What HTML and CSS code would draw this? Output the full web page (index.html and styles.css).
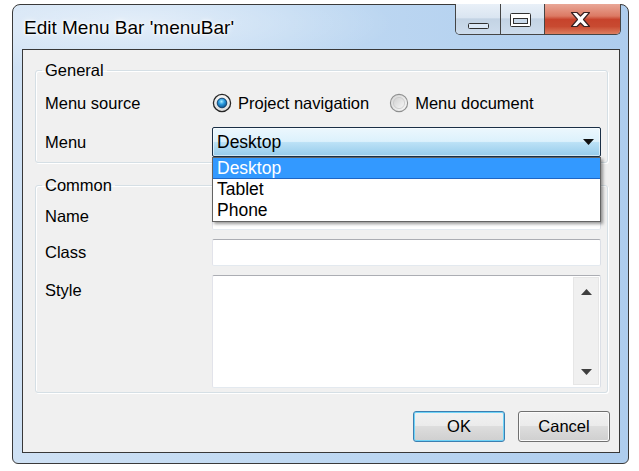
FILE: index.html
```html
<!DOCTYPE html>
<html>
<head>
<meta charset="utf-8">
<title>Edit Menu Bar</title>
<link rel="stylesheet" href="styles.css">
</head>
<body>
<div class="window">
  <div class="titlebar">
    <span class="title">Edit Menu Bar 'menuBar'</span>
    <div class="caption-buttons">
      <div class="cbtn min">
        <svg width="44" height="30" viewBox="0 0 44 30"><rect x="12.5" y="19.5" width="20" height="5" rx="1" fill="#dbe8f6" stroke="#303030"/></svg>
      </div>
      <div class="cbtn max">
        <svg width="43" height="30" viewBox="0 0 43 30"><rect x="9.5" y="9.5" width="20" height="13" rx="1" fill="#fff" stroke="#303030"/><rect x="12.5" y="14.5" width="14" height="5" fill="#c9d9ea" stroke="#303030"/></svg>
      </div>
      <div class="cbtn close">
        <svg width="75" height="30" viewBox="0 0 75 30"><path d="M26.5 8.5 H32 L35.5 12 L39 8.5 H44.5 L38.5 15.5 L44.5 22.5 H39 L35.5 19 L32 22.5 H26.5 L32.5 15.5 Z" fill="#fff" stroke="#3a2222" stroke-width="1.2" stroke-linejoin="round"/></svg>
      </div>
    </div>
  </div>
  <div class="client">
    <fieldset class="group general">
      <legend>General</legend>
      <div class="form">
        <span class="label">Menu source</span>
        <div class="radios">
          <span class="radio">
            <svg width="20" height="20" viewBox="0 0 20 20">
              <defs>
                <radialGradient id="dot" cx="45%" cy="35%" r="65%"><stop offset="0" stop-color="#a9ecff"/><stop offset="0.45" stop-color="#2a9be0"/><stop offset="1" stop-color="#0b4f8a"/></radialGradient>
                <linearGradient id="ringOn" x1="0" y1="0" x2="0" y2="1"><stop offset="0" stop-color="#f6f6f6"/><stop offset="1" stop-color="#dcdcdc"/></linearGradient>
              </defs>
              <circle cx="10" cy="10" r="8.6" fill="url(#ringOn)" stroke="#262626" stroke-width="1.3"/>
              <circle cx="10" cy="10" r="4.8" fill="url(#dot)" stroke="#0c3b66" stroke-width="0.9"/>
            </svg>
            Project navigation
          </span>
          <span class="radio">
            <svg width="20" height="20" viewBox="0 0 20 20">
              <defs>
                <linearGradient id="ringOff" x1="0" y1="0" x2="1" y2="1"><stop offset="0" stop-color="#d4d4d4"/><stop offset="1" stop-color="#fafafa"/></linearGradient>
                <linearGradient id="ringIn" x1="0" y1="0" x2="1" y2="1"><stop offset="0" stop-color="#cfcfcf"/><stop offset="1" stop-color="#f8f8f8"/></linearGradient>
              </defs>
              <circle cx="10" cy="10" r="8.6" fill="url(#ringOff)" stroke="#8e8f8f" stroke-width="1.1"/>
              <circle cx="10" cy="10" r="5.6" fill="url(#ringIn)" stroke="#c4c4c4" stroke-width="0.7"/>
            </svg>
            Menu document
          </span>
        </div>
        <span class="label">Menu</span>
        <div class="combo">
          <span class="combo-text">Desktop</span>
          <svg class="combo-arrow" width="11" height="6" viewBox="0 0 11 6"><path d="M0 0 H11 L5.5 6 Z" fill="#111"/></svg>
          <ul class="droplist">
            <li class="selected">Desktop</li>
            <li>Tablet</li>
            <li>Phone</li>
          </ul>
        </div>
      </div>
    </fieldset>
    <fieldset class="group common">
      <legend>Common</legend>
      <div class="form">
        <span class="label">Name</span>
        <div class="input">menuBar</div>
        <span class="label">Class</span>
        <div class="input"></div>
        <span class="label top">Style</span>
        <div class="textarea">
          <div class="scrollbar">
            <svg width="11" height="6" viewBox="0 0 11 6"><path d="M0 6 H11 L5.5 0 Z" fill="#3f3f3f"/></svg>
            <svg width="11" height="6" viewBox="0 0 11 6"><path d="M0 0 H11 L5.5 6 Z" fill="#3f3f3f"/></svg>
          </div>
        </div>
      </div>
    </fieldset>
    <div class="buttons">
      <button class="btn default">OK</button>
      <button class="btn">Cancel</button>
    </div>
  </div>
</div>
</body>
</html>
```
FILE: styles.css
```css
* {
  box-sizing: border-box;
}

html,
body {
  margin: 0;
  padding: 0;
  background: #ffffff;
}

body {
  font-family: "Liberation Sans", Arial, sans-serif;
  font-size: 16.5px;
  color: #000;
}

.window {
  margin: 4px 0 0 12px;
  width: 617px;
  height: 460px;
  border: 1px solid #3a3a3a;
  border-radius: 8px 8px 6px 6px;
  padding: 0 8px 10px 9px;
  display: flex;
  flex-direction: column;
  background:
    radial-gradient(ellipse 260px 50px at 120px 18px, rgba(255, 255, 255, 0.5), rgba(255, 255, 255, 0)),
    linear-gradient(to right, #cfe1f4 0%, #c0d9f2 45%, #aecdee 100%);
}

.titlebar {
  height: 44px;
  display: flex;
  justify-content: space-between;
  align-items: flex-start;
}

.title {
  margin: 12px 0 0 2px;
  font-size: 19px;
  line-height: 22px;
  color: #000;
  text-shadow: 0 0 6px #fff, 0 0 3px #fff, 0 0 2px #fff;
}

.caption-buttons {
  display: flex;
  margin: -1px -1px 0 0;
  height: 31px;
  border: 1px solid #454545;
  border-top: none;
  border-radius: 0 0 5px 5px;
  overflow: hidden;
}

.cbtn svg {
  display: block;
}

.min,
.max {
  background: linear-gradient(#e9f0f8 0%, #dae5f1 45%, #c3d3e4 50%, #cddcec 100%);
}

.min {
  width: 44px;
}

.max {
  width: 44px;
  border-left: 1px solid #454545;
}

.close {
  width: 76px;
  border-left: 1px solid #454545;
  background: linear-gradient(#e9a797 0%, #dc7a64 40%, #c7432c 52%, #c84a31 75%, #dd7e5f 100%);
}

.client {
  height: 404px;
  border: 1px solid #383838;
  background: #f0f0f0;
  padding: 11px 11px 0 12px;
}

.group {
  margin: 0;
  min-inline-size: 0;
  padding: 8px 6px 5px 9px;
  border: 1px solid #d5dfe5;
  border-radius: 3px;
  box-shadow: inset 1px 1px 0 #fff, 1px 1px 0 #fff;
}

.group legend {
  padding: 0 3px;
  margin-left: -3px;
  font-size: 16.5px;
  line-height: 19px;
}

.common {
  margin-top: 13px;
  padding-bottom: 4px;
}

.form {
  display: grid;
  grid-template-columns: 167px 1fr;
  row-gap: 9px;
  align-items: center;
}

.label {
  line-height: 19px;
}

.label.top {
  align-self: start;
  padding-top: 6px;
}

.radios {
  height: 30px;
  display: flex;
  align-items: center;
  gap: 20px;
}

.radio {
  display: flex;
  align-items: center;
  gap: 6px;
}

.radio svg {
  display: block;
}

.combo {
  position: relative;
  height: 30px;
  border: 1px solid #1a2f46;
  border-radius: 2px;
  display: flex;
  align-items: center;
  justify-content: space-between;
  padding: 0 6px 0 4px;
  background: linear-gradient(#ecf7fd 0%, #dcf1fc 48%, #bbe1f6 52%, #96cbeb 100%);
  box-shadow: inset 0 0 0 1px rgba(255, 255, 255, 0.55);
}

.combo-text {
  font-size: 17.5px;
  line-height: 21px;
}

.combo-arrow {
  display: block;
}

.droplist {
  position: absolute;
  z-index: 10;
  top: calc(100% + 1px);
  left: -1px;
  right: -1px;
  margin: 0;
  padding: 0;
  list-style: none;
  background: #fff;
  border: 1px solid #646464;
  box-shadow: 2px 2px 3px rgba(0, 0, 0, 0.4);
}

.droplist li {
  height: 21px;
  line-height: 21px;
  padding-left: 4px;
  font-size: 17.5px;
}

.droplist li.selected {
  background: #3399ff;
  color: #fff;
  border-bottom: 1px solid #1f66c4;
  line-height: 20px;
}

.input {
  height: 27px;
  background: #fff;
  border: 1px solid;
  border-color: #abadb3 #dbdfe6 #e3e9ef #e2e3ea;
  border-radius: 2px;
  padding-left: 4px;
  line-height: 25px;
}

.textarea {
  height: 113px;
  background: #fff;
  border: 1px solid;
  border-color: #abadb3 #dbdfe6 #e3e9ef #e2e3ea;
  border-radius: 2px;
  display: flex;
  justify-content: flex-end;
  padding: 1px 1px 2px 0;
}

.scrollbar {
  width: 26px;
  background: #f0f0f0;
  border: 1px solid #e6e6e6;
  display: flex;
  flex-direction: column;
  justify-content: space-between;
  align-items: center;
  padding: 11px 0 9px;
}

.scrollbar svg {
  display: block;
}

.buttons {
  display: flex;
  justify-content: flex-end;
  gap: 13px;
  margin: 18px -2px 0 0;
}

.btn {
  width: 92px;
  height: 31px;
  font-family: "Liberation Sans", Arial, sans-serif;
  font-size: 16.5px;
  color: #000;
  border: 1px solid #707070;
  border-radius: 3px;
  background: linear-gradient(#f2f2f2 0%, #ebebeb 49%, #dddddd 50%, #cfcfcf 100%);
  box-shadow: inset 0 0 0 1px #fbfbfb;
  padding: 0;
}

.btn.default {
  border-color: #3c7fb1;
  box-shadow: inset 0 0 0 1px #6fd3f7;
}
```
